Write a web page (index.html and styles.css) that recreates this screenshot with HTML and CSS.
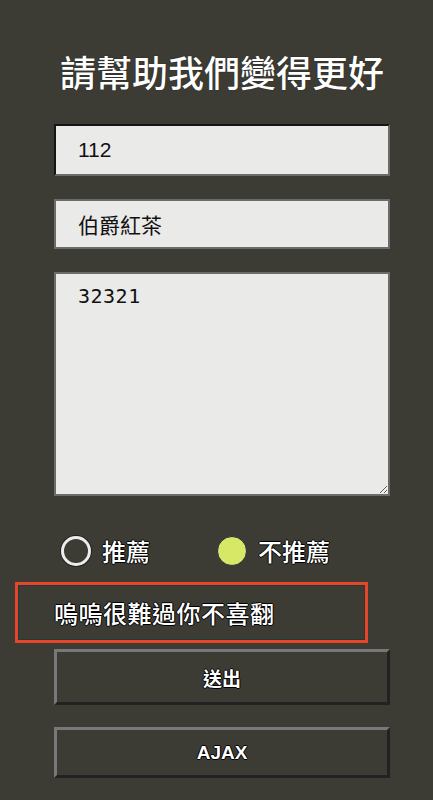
FILE: index.html
```html
<!DOCTYPE html>
<html lang="zh-Hant">
<head>
<meta charset="utf-8">
<title>請幫助我們變得更好</title>
<link rel="stylesheet" href="styles.css">
</head>
<body>
<main class="page">
  <h1 class="title">請幫助我們變得更好</h1>
  <form class="form">
    <input class="field field-focus" type="text" value="112">
    <input class="field" type="text" value="伯爵紅茶">
    <textarea class="area">32321</textarea>
    <div class="radios">
      <label class="radio"><span class="dot"></span><span class="radio-text">推薦</span></label>
      <label class="radio"><span class="dot dot-on"></span><span class="radio-text">不推薦</span></label>
    </div>
    <div class="message">嗚嗚很難過你不喜翻</div>
    <button class="btn btn-first" type="button">送出</button>
    <button class="btn" type="button">AJAX</button>
  </form>
</main>
</body>
</html>
```

FILE: styles.css
```css
html, body {
  margin: 0;
  padding: 0;
  background: #3c3c35;
}
body {
  font-family: "Liberation Sans", "Noto Sans CJK TC", sans-serif;
  color: #fff;
}
.page {
  width: 336px;
  margin-left: 54px;
  padding-top: 49px;
}
.title {
  margin: 0;
  font-family: "Noto Sans CJK TC", sans-serif;
  font-weight: 500;
  font-size: 36px;
  line-height: 44px;
  text-align: center;
  text-shadow: 0 0 1px #000;
}
.form {
  display: flex;
  flex-direction: column;
  margin-top: 31px;
}
.field {
  box-sizing: border-box;
  width: 336px;
  height: 50px;
  margin: 0 0 23px 0;
  padding: 0 0 0 22px;
  background: #eaeae9;
  border: 2px solid #6b6b6b;
  font-family: "Liberation Sans", "Noto Sans CJK TC", sans-serif;
  font-size: 21px;
  color: #111;
  outline: none;
}
.field-focus {
  height: 52px;
  border-top-color: #151515;
  border-left-color: #151515;
}
.area {
  box-sizing: border-box;
  width: 336px;
  height: 224px;
  margin: 0;
  padding: 10px 22px;
  background: #eaeae9;
  border: 2px solid #6b6b6b;
  font-family: "DejaVu Sans Mono", monospace;
  font-size: 20px;
  letter-spacing: 0.5px;
  color: #111;
  outline: none;
  resize: both;
}
.radios {
  display: flex;
  align-items: center;
  gap: 67px;
  padding-left: 7px;
  margin-top: 40px;
  height: 30px;
}
.radio {
  display: flex;
  align-items: center;
  gap: 11px;
}
.dot {
  box-sizing: border-box;
  width: 30px;
  height: 30px;
  border-radius: 50%;
  border: 3px solid #ececec;
  box-shadow: 0 0 0 1px #222;
}
.dot-on {
  border: 1px solid #2a2a45;
  background: #d6e866;
  box-shadow: none;
}
.radio-text {
  font-family: "Noto Sans CJK TC", sans-serif;
  font-weight: 500;
  font-size: 24px;
  line-height: 30px;
  text-shadow: -1px 0 #000, 1px 0 #000, 0 -1px #000, 0 1px #000;
}
.message {
  box-sizing: border-box;
  width: 353px;
  height: 61px;
  margin: 16px 0 0 -39px;
  padding-left: 36px;
  display: flex;
  align-items: center;
  border: 3px solid #e8442a;
  box-shadow: inset 0 0 0 1px #1d3d37;
  font-family: "Noto Sans CJK TC", sans-serif;
  font-weight: 500;
  font-size: 24px;
  letter-spacing: 0.5px;
  text-shadow: -1px 0 #000, 1px 0 #000, 0 -1px #000, 0 1px #000;
}
.btn {
  box-sizing: border-box;
  width: 336px;
  height: 51px;
  margin: 0;
  padding: 0;
  background: #3c3c35;
  border: 3px solid;
  border-color: #787878 #222 #222 #787878;
  color: #fff;
  font-family: "Liberation Sans", "Noto Sans CJK TC", sans-serif;
  font-size: 19px;
  font-weight: 700;
  text-shadow: -1px 0 #000, 1px 0 #000, 0 -1px #000, 0 1px #000;
}
.btn-first {
  height: 56px;
  margin: 6px 0 22px 0;
}
```
